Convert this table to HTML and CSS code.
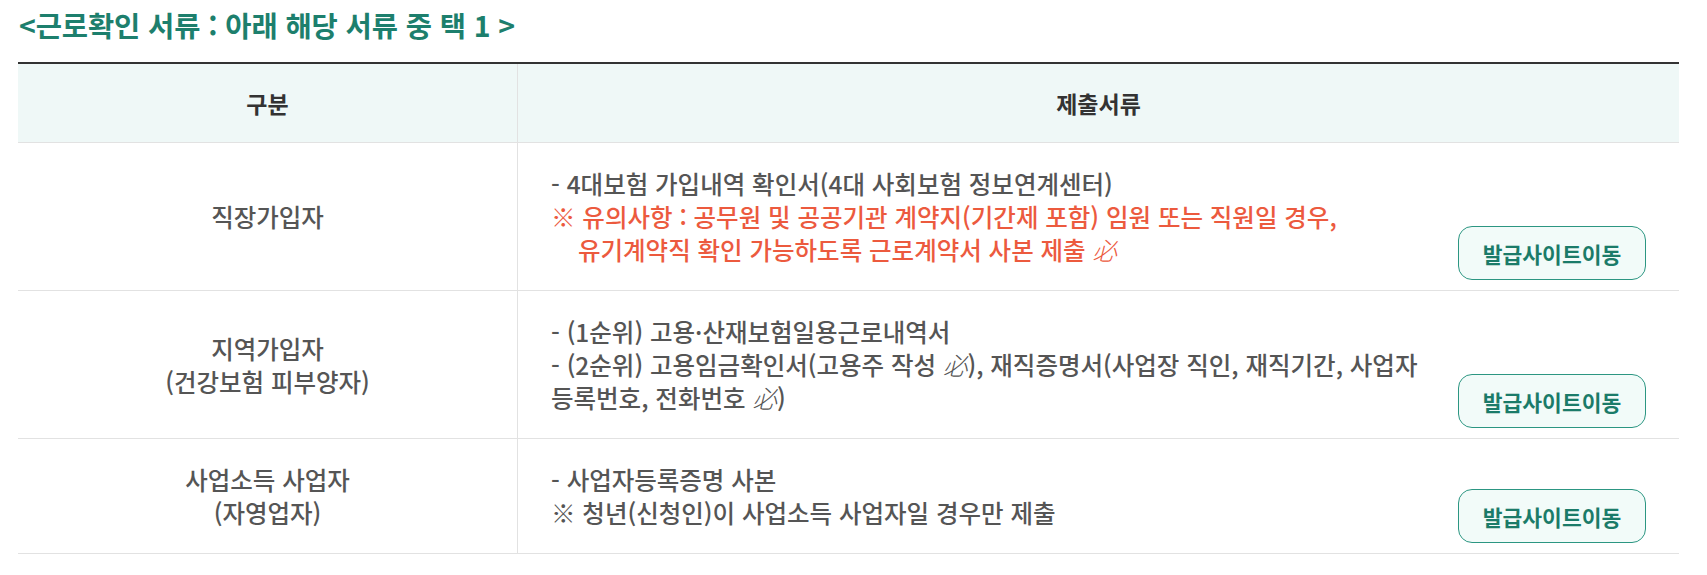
FILE: index.html
```html
<!DOCTYPE html>
<html lang="ko">
<head>
<meta charset="utf-8">
<link rel="stylesheet" href="styles.css">
</head>
<body>
<div class="wrap">
  <h2 class="title">&lt;근로확인 서류 : 아래 해당 서류 중 택 1 &gt;</h2>
  <table class="docs">
    <thead>
      <tr>
        <th class="c1">구분</th>
        <th class="c2">제출서류</th>
      </tr>
    </thead>
    <tbody>
      <tr>
        <td class="cat">직장가입자</td>
        <td class="sub">
          <div class="subrow">
            <div class="txt">
              <p>- 4대보험 가입내역 확인서(4대 사회보험 정보연계센터)</p>
              <p class="warn">※ 유의사항 : 공무원 및 공공기관 계약지(기간제 포함) 임원 또는 직원일 경우,<br>유기계약직 확인 가능하도록 근로계약서 사본 제출 <span class="must">必</span></p>
            </div>
            <button class="go" type="button">발급사이트이동</button>
          </div>
        </td>
      </tr>
      <tr>
        <td class="cat">지역가입자<br>(건강보험 피부양자)</td>
        <td class="sub">
          <div class="subrow">
            <div class="txt">
              <p>- (1순위) 고용·산재보험일용근로내역서</p>
              <p>- (2순위) 고용임금확인서(고용주 작성 <span class="must">必</span>), 재직증명서(사업장 직인, 재직기간, 사업자<br>등록번호, 전화번호 <span class="must">必</span>)</p>
            </div>
            <button class="go" type="button">발급사이트이동</button>
          </div>
        </td>
      </tr>
      <tr>
        <td class="cat">사업소득 사업자<br>(자영업자)</td>
        <td class="sub">
          <div class="subrow">
            <div class="txt">
              <p>- 사업자등록증명 사본</p>
              <p>※ 청년(신청인)이 사업소득 사업자일 경우만 제출</p>
            </div>
            <button class="go" type="button">발급사이트이동</button>
          </div>
        </td>
      </tr>
    </tbody>
  </table>
</div>
</body>
</html>
```

FILE: styles.css
```css
html, body {
  margin: 0;
  padding: 0;
  background: #ffffff;
}

body {
  font-family: "Noto Sans CJK KR", "Noto Sans", sans-serif;
  color: #555555;
}

.wrap {
  padding: 6px 0 0 18px;
  width: 1661px;
}

.title {
  margin: 0 0 18px 1px;
  font-size: 28.5px;
  line-height: 38px;
  font-weight: 700;
  color: #1d7f6d;
  letter-spacing: -0.1px;
}

.docs {
  width: 1661px;
  border-collapse: collapse;
  table-layout: fixed;
  border-top: 2px solid #333333;
}

.docs th {
  background: #eff8f7;
  height: 78px;
  padding: 0;
  font-size: 23px;
  font-weight: 700;
  color: #333333;
  border-bottom: 1px solid #e2e2e2;
}

.docs .c1 {
  width: 499px;
  border-right: 1px solid #e2e2e2;
}

.docs td {
  border-bottom: 1px solid #e2e2e2;
  vertical-align: middle;
}

.docs td.cat {
  border-right: 1px solid #e2e2e2;
  text-align: center;
  font-size: 24.5px;
  font-weight: 500;
  line-height: 33px;
  padding: 0;
}

.docs td.sub {
  padding: 24px 33px 10px 33px;
}

.subrow {
  display: flex;
  align-items: flex-end;
  justify-content: space-between;
  gap: 16px;
}

.txt {
  padding-bottom: 14px;
  font-size: 24.5px;
  font-weight: 500;
  line-height: 33px;
  white-space: nowrap;
}

.txt p {
  margin: 0;
}

.warn {
  color: #ec5a3e;
  padding-left: 27px;
  text-indent: -27px;
}

.must {
  font-weight: 300;
  font-style: italic;
}

.go {
  flex: none;
  width: 188px;
  height: 54px;
  border: 1px solid #2c9682;
  border-radius: 14px;
  background: #f2fbf9;
  color: #1b7b69;
  font-family: "Noto Sans CJK KR", "Noto Sans", sans-serif;
  font-size: 21.5px;
  font-weight: 700;
  padding: 0;
  cursor: pointer;
}
```
